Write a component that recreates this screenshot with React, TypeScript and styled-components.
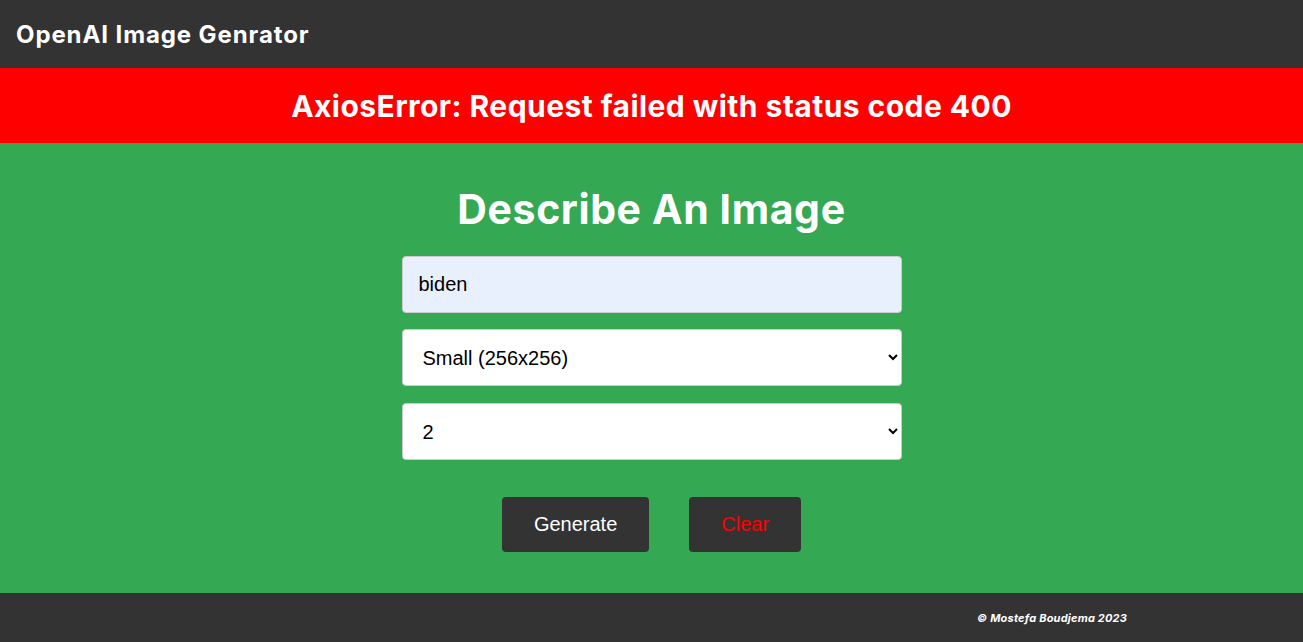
import React from 'react';
import styled, { createGlobalStyle } from 'styled-components';

const GlobalStyle = createGlobalStyle`
  body {
    margin: 0;
    font-family: Inter, "Noto Sans", sans-serif;
  }
  * { box-sizing: border-box; }
`;

const Page = styled.div`
  display: flex;
  flex-direction: column;
  min-height: 642px;
`;

const Navbar = styled.nav`
  height: 68px;
  background: #333333;
  display: flex;
  align-items: center;
  padding: 0 16px;
`;

const Brand = styled.h1`
  margin: 0;
  color: #fff;
  font-size: 24px;
  font-weight: 700;
  letter-spacing: 0.9px;
`;

const ErrorBar = styled.div`
  height: 75px;
  background: #ff0000;
  display: flex;
  align-items: center;
  justify-content: center;
`;

const ErrorText = styled.h2`
  margin: 0;
  color: #fff;
  font-size: 30px;
  font-weight: 700;
  letter-spacing: 0.45px;
`;

const Main = styled.main`
  height: 450px;
  background: #34a853;
  display: flex;
  flex-direction: column;
  align-items: center;
  padding-top: 42px;
`;

const Title = styled.h1`
  margin: 0 0 23px;
  color: #fff;
  font-size: 41px;
  font-weight: 700;
  line-height: 48px;
  letter-spacing: 0.6px;
`;

const Form = styled.form`
  width: 500px;
  display: flex;
  flex-direction: column;
  gap: 16px;
`;

const fieldCss = `
  width: 100%;
  height: 57px;
  border: 1px solid #cccccc;
  border-radius: 4px;
  font-family: Arial, "Liberation Sans", sans-serif;
  font-size: 20px;
  color: #000;
  outline: none;
`;

const TextInput = styled.input`
  ${fieldCss}
  background: #e8f0fe;
  padding: 0 16px;
`;

const Select = styled.select`
  ${fieldCss}
  background: #fff;
  padding: 0 16px;
  margin-bottom: 1px;
`;

const Actions = styled.div`
  display: flex;
  justify-content: center;
  gap: 40px;
  margin-top: 20px;
`;

const Button = styled.button<{ $danger?: boolean }>`
  height: 55px;
  padding: 0 32px;
  border: none;
  border-radius: 4px;
  background: #333333;
  color: ${(p) => (p.$danger ? '#ff0000' : '#ffffff')};
  font-family: Arial, "Liberation Sans", sans-serif;
  font-size: 20px;
  cursor: pointer;
`;

const Footer = styled.footer`
  height: 49px;
  background: #333333;
  display: flex;
  align-items: center;
  justify-content: flex-end;
  padding-right: 176px;
`;

const FooterText = styled.p`
  margin: 0;
  color: #fff;
  font-size: 11px;
  font-weight: 700;
  font-style: italic;
  letter-spacing: 0.2px;
`;

export default function App() {
  return (
    <>
      <GlobalStyle />
      <Page>
        <Navbar>
          <Brand>OpenAI Image Genrator</Brand>
        </Navbar>
        <ErrorBar>
          <ErrorText>AxiosError: Request failed with status code 400</ErrorText>
        </ErrorBar>
        <Main>
          <Title>Describe An Image</Title>
          <Form onSubmit={(e) => e.preventDefault()}>
            <TextInput type="text" defaultValue="biden" />
            <Select defaultValue="small">
              <option value="small">Small (256x256)</option>
              <option value="medium">Medium (512x512)</option>
              <option value="large">Large (1024x1024)</option>
            </Select>
            <Select defaultValue="2">
              <option value="1">1</option>
              <option value="2">2</option>
              <option value="3">3</option>
              <option value="4">4</option>
            </Select>
            <Actions>
              <Button type="submit">Generate</Button>
              <Button type="button" $danger>Clear</Button>
            </Actions>
          </Form>
        </Main>
        <Footer>
          <FooterText>© Mostefa Boudjema 2023</FooterText>
        </Footer>
      </Page>
    </>
  );
}
